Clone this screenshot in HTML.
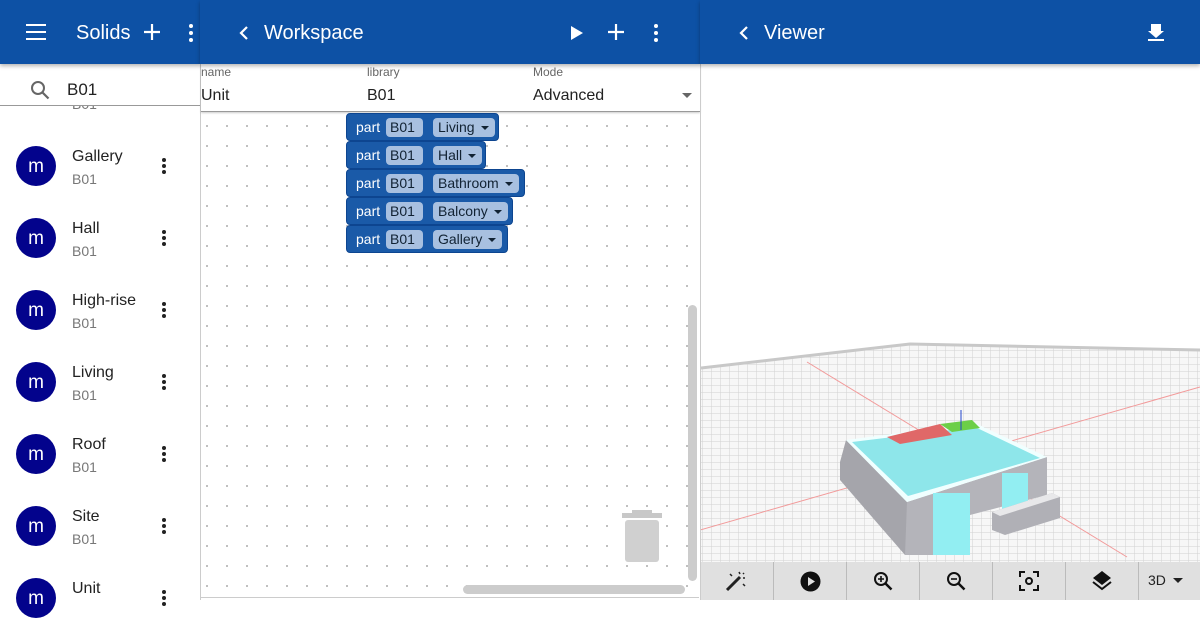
<!DOCTYPE html>
<html><head><style>
*{box-sizing:border-box;margin:0;padding:0}
body{width:1200px;height:600px;overflow:hidden;font-family:"Liberation Sans",sans-serif;background:#fff;position:relative}
.hdr{position:absolute;top:0;height:64px;background:#0d51a5;color:#fff;box-shadow:0 2px 4px rgba(0,0,0,.3);z-index:2}
.hdr .t{position:absolute;top:22px;font-size:20px}
.abs{position:absolute}
.item{position:absolute;left:0;width:200px;height:72px}
.av{position:absolute;left:16px;top:16px;width:40px;height:40px;border-radius:50%;background:#03038c;color:#fff;font-size:19px;text-align:center;line-height:42px}
.nm{position:absolute;left:72px;top:18px;font-size:16px;color:#222}
.sb{position:absolute;left:72px;top:41px;font-size:14px;color:#777}
.dots{position:absolute;left:162px;top:28px;width:4px}
.dots i{display:block;width:4px;height:4px;border-radius:2px;background:#222;margin-bottom:2px}
.blk{position:absolute;left:346px;height:28px;background:#1a5aa8;border:1px solid #0d4590;border-radius:4px;color:#fff;font-size:14px}
.blk .p{position:absolute;left:9px;top:5px}
.blk .b{position:absolute;left:39px;top:4px;width:37px;height:19px;background:#a8c0e0;border-radius:4px;color:#123;padding:1px 0 0 4px}
.blk .d{position:absolute;left:86px;top:4px;height:19px;background:#a8c0e0;border-radius:4px;color:#123;padding:1px 20px 0 5px}
.blk .d:after{content:"";position:absolute;right:6px;top:8px;border:4px solid transparent;border-top:4px solid #123}
.tb{position:absolute;top:562px;height:38px;background:#e0e0e0;border-right:1px solid #bbb}
</style></head><body>
<div class="hdr" style="left:0;width:200px">
<svg class="abs" style="left:26px;top:23px" width="20" height="18"><path d="M0 2h20M0 9h20M0 16h20" stroke="#fff" stroke-width="2"/></svg>
<div class="t" style="left:76px">Solids</div>
<svg class="abs" style="left:143px;top:23px" width="18" height="18"><path d="M9 1v16M1 9h16" stroke="#fff" stroke-width="2.2"/></svg>
<svg class="abs" style="left:188px;top:23px" width="6" height="20"><circle cx="3" cy="3" r="2" fill="#fff"/><circle cx="3" cy="10" r="2" fill="#fff"/><circle cx="3" cy="17" r="2" fill="#fff"/></svg>
</div>
<div class="hdr" style="left:200px;width:500px">
<svg class="abs" style="left:39px;top:26px" width="10" height="14"><path d="M8 1L2 7l6 6" stroke="#fff" stroke-width="2.2" fill="none"/></svg>
<div class="t" style="left:64px">Workspace</div>
<svg class="abs" style="left:370px;top:25px" width="14" height="16"><path d="M1 1l12 7-12 7z" fill="#fff"/></svg>
<svg class="abs" style="left:407px;top:23px" width="18" height="18"><path d="M9 1v16M1 9h16" stroke="#fff" stroke-width="2.2"/></svg>
<svg class="abs" style="left:453px;top:23px" width="6" height="20"><circle cx="3" cy="3" r="2" fill="#fff"/><circle cx="3" cy="10" r="2" fill="#fff"/><circle cx="3" cy="17" r="2" fill="#fff"/></svg>
</div>
<div class="hdr" style="left:700px;width:500px">
<svg class="abs" style="left:39px;top:26px" width="10" height="14"><path d="M8 1L2 7l6 6" stroke="#fff" stroke-width="2.2" fill="none"/></svg>
<div class="t" style="left:64px">Viewer</div>
<svg class="abs" style="left:447px;top:23px" width="18" height="18"><path d="M4 1h10v7h3l-8 7-8-7h3zM1 16h16v2H1z" fill="#fff"/></svg>
</div>
<svg class="abs" style="left:30px;top:80px" width="20" height="20"><circle cx="8" cy="8" r="6" stroke="#666" stroke-width="2" fill="none"/><path d="M12.5 12.5l6 6" stroke="#666" stroke-width="2.2"/></svg>
<div class="abs" style="left:67px;top:80px;font-size:17px;color:#222">B01</div>
<div class="abs" style="left:0;top:105px;width:200px;height:1px;background:#999"></div>
<div class="abs" style="left:0;top:106px;width:200px;height:494px;overflow:hidden">
<div class="abs" style="left:72px;top:-10px;font-size:14px;color:#777">B01</div>
</div>
<div class="item" style="top:130px"><div class="av">m</div><div class="nm">Gallery</div><div class="sb">B01</div><div class="dots"><i></i><i></i><i></i></div></div>
<div class="item" style="top:202px"><div class="av">m</div><div class="nm">Hall</div><div class="sb">B01</div><div class="dots"><i></i><i></i><i></i></div></div>
<div class="item" style="top:274px"><div class="av">m</div><div class="nm">High-rise</div><div class="sb">B01</div><div class="dots"><i></i><i></i><i></i></div></div>
<div class="item" style="top:346px"><div class="av">m</div><div class="nm">Living</div><div class="sb">B01</div><div class="dots"><i></i><i></i><i></i></div></div>
<div class="item" style="top:418px"><div class="av">m</div><div class="nm">Roof</div><div class="sb">B01</div><div class="dots"><i></i><i></i><i></i></div></div>
<div class="item" style="top:490px"><div class="av">m</div><div class="nm">Site</div><div class="sb">B01</div><div class="dots"><i></i><i></i><i></i></div></div>
<div class="item" style="top:562px"><div class="av">m</div><div class="nm">Unit</div><div class="dots"><i></i><i></i><i></i></div></div>
<div class="abs" style="left:200px;top:64px;width:1px;height:536px;background:#ccc"></div>
<div class="abs" style="left:201px;top:112px;width:498px;height:486px;background-color:#fff;background-image:radial-gradient(circle,#bbb 1px,transparent 1.2px);background-size:20px 20px;background-position:-4px 4px;border-bottom:1px solid #ccc"></div>
<div class="abs" style="left:201px;top:64px;width:499px;height:48px;background:#fff;border-bottom:1px solid #999;box-shadow:0 1px 2px rgba(0,0,0,.2)">
<div class="abs" style="left:0;top:1px;font-size:12px;color:#666">name</div>
<div class="abs" style="left:0;top:23px;font-size:16px;color:#222">Unit</div>
<div class="abs" style="left:166px;top:1px;font-size:12px;color:#666">library</div>
<div class="abs" style="left:166px;top:23px;font-size:16px;color:#222">B01</div>
<div class="abs" style="left:332px;top:1px;font-size:12px;color:#666">Mode</div>
<div class="abs" style="left:332px;top:23px;font-size:16px;color:#222">Advanced</div>
<div class="abs" style="left:481px;top:29px;border:5px solid transparent;border-top:5px solid #666"></div>
</div>
<div class="blk" style="top:113px;width:153px"><span class="p">part</span><span class="b">B01</span><span class="d">Living</span></div>
<div class="blk" style="top:141px;width:140px"><span class="p">part</span><span class="b">B01</span><span class="d">Hall</span></div>
<div class="blk" style="top:169px;width:179px"><span class="p">part</span><span class="b">B01</span><span class="d">Bathroom</span></div>
<div class="blk" style="top:197px;width:167px"><span class="p">part</span><span class="b">B01</span><span class="d">Balcony</span></div>
<div class="blk" style="top:225px;width:162px"><span class="p">part</span><span class="b">B01</span><span class="d">Gallery</span></div>
<svg class="abs" style="left:620px;top:507px" width="44" height="56"><path d="M12 3h20v3H12z M2 6h40v5H2z" fill="#c8c8c8"/><rect x="5" y="13" width="34" height="42" rx="3" fill="#d0d0d0"/></svg>
<div class="abs" style="left:688px;top:305px;width:9px;height:276px;border-radius:5px;background:#ccc"></div>
<div class="abs" style="left:463px;top:585px;width:222px;height:9px;border-radius:5px;background:#ccc"></div>
<div class="abs" style="left:700px;top:64px;width:1px;height:536px;background:#ccc"></div>
<svg class="abs" style="left:701px;top:64px" width="499" height="498">
<defs><pattern id="g" width="9" height="7" patternUnits="userSpaceOnUse"><path d="M0 0H9M0 0V7" stroke="#d2d2d2" stroke-width="1"/></pattern></defs>
<g transform="translate(-701,-64)">
<polygon points="701,368 910,344 1200,350 1200,562 701,562" fill="#f7f7f7"/>
<polygon points="701,368 910,344 1200,350 1200,562 701,562" fill="url(#g)"/>
<path d="M701 368 L910 344 L1200 350" stroke="#c8c8c8" stroke-width="3" fill="none"/>
<path d="M807 362 L1127 557" stroke="#f29a9a" stroke-width="1" fill="none"/>
<path d="M700 530 L1200 387" stroke="#f29a9a" stroke-width="1" fill="none"/>
<polygon points="840,462 846,440 907,502 933,555 905,555 840,480" fill="#a5a5ab"/>
<polygon points="907,502 1047,457 1047,495 970,515 933,555 905,555" fill="#b4b4ba"/>
<polygon points="846,440 975,423 1047,457 907,502" fill="#f0ffff"/>
<polygon points="852,442 975,427 1040,458 908,496" fill="#8ee6ea"/>
<polygon points="887,437 940,424 952,435 900,444" fill="#e06868"/>
<polygon points="940,424 972,420 980,428 952,432" fill="#6ccf48"/>
<rect x="933" y="493" width="37" height="62" fill="#92eef2"/>
<rect x="1002" y="473" width="26" height="36" fill="#92eef2"/>
<polygon points="992,512 1052,493 1060,497 1060,518 1005,535 992,530" fill="#b0b0b6"/>
<polygon points="992,512 1052,493 1060,497 1000,516" fill="#e8e8ea"/>
<path d="M961 410v20" stroke="#2244cc" stroke-width="1"/>
</g>
</svg>
<div class="tb" style="left:701px;width:73px"><svg class="abs" style="left:24px;top:8px" width="22" height="22"><path d="M2 20L15 7" stroke="#222" stroke-width="3"/><path d="M14 2l1 2M19 3l-1 1M20 8l-2 0M5 4l2 2M20 16l-2-2" stroke="#222" stroke-width="1.5"/></svg></div>
<div class="tb" style="left:774px;width:73px"><svg class="abs" style="left:26px;top:9px" width="21" height="21"><circle cx="10.5" cy="10.5" r="10" fill="#111"/><path d="M8 6l7 4.5-7 4.5z" fill="#e0e0e0"/></svg></div>
<div class="tb" style="left:847px;width:73px"><svg class="abs" style="left:26px;top:9px" width="21" height="21"><circle cx="8" cy="8" r="6" stroke="#111" stroke-width="2" fill="none"/><path d="M12.5 12.5l6 6" stroke="#111" stroke-width="2.5"/><path d="M8 5v6M5 8h6" stroke="#111" stroke-width="1.6"/></svg></div>
<div class="tb" style="left:920px;width:73px"><svg class="abs" style="left:26px;top:9px" width="21" height="21"><circle cx="8" cy="8" r="6" stroke="#111" stroke-width="2" fill="none"/><path d="M12.5 12.5l6 6" stroke="#111" stroke-width="2.5"/><path d="M5 8h6" stroke="#111" stroke-width="1.6"/></svg></div>
<div class="tb" style="left:993px;width:73px"><svg class="abs" style="left:26px;top:9px" width="20" height="20"><path d="M1 6V1h5M14 1h5v5M19 14v5h-5M6 19H1v-5" stroke="#111" stroke-width="2" fill="none"/><circle cx="10" cy="10" r="3" stroke="#111" stroke-width="2" fill="none"/></svg></div>
<div class="tb" style="left:1066px;width:73px"><svg class="abs" style="left:26px;top:8px" width="20" height="22"><path d="M10 1l9 7-9 7-9-7z" fill="#111"/><path d="M1 12l9 7 9-7" stroke="#111" stroke-width="2" fill="none"/></svg></div>
<div class="tb" style="left:1139px;width:61px;border:0"><span class="abs" style="left:9px;top:10px;font-size:14px;color:#222">3D</span><span class="abs" style="left:34px;top:16px;border:5px solid transparent;border-top:5px solid #222"></span></div>
</body></html>
